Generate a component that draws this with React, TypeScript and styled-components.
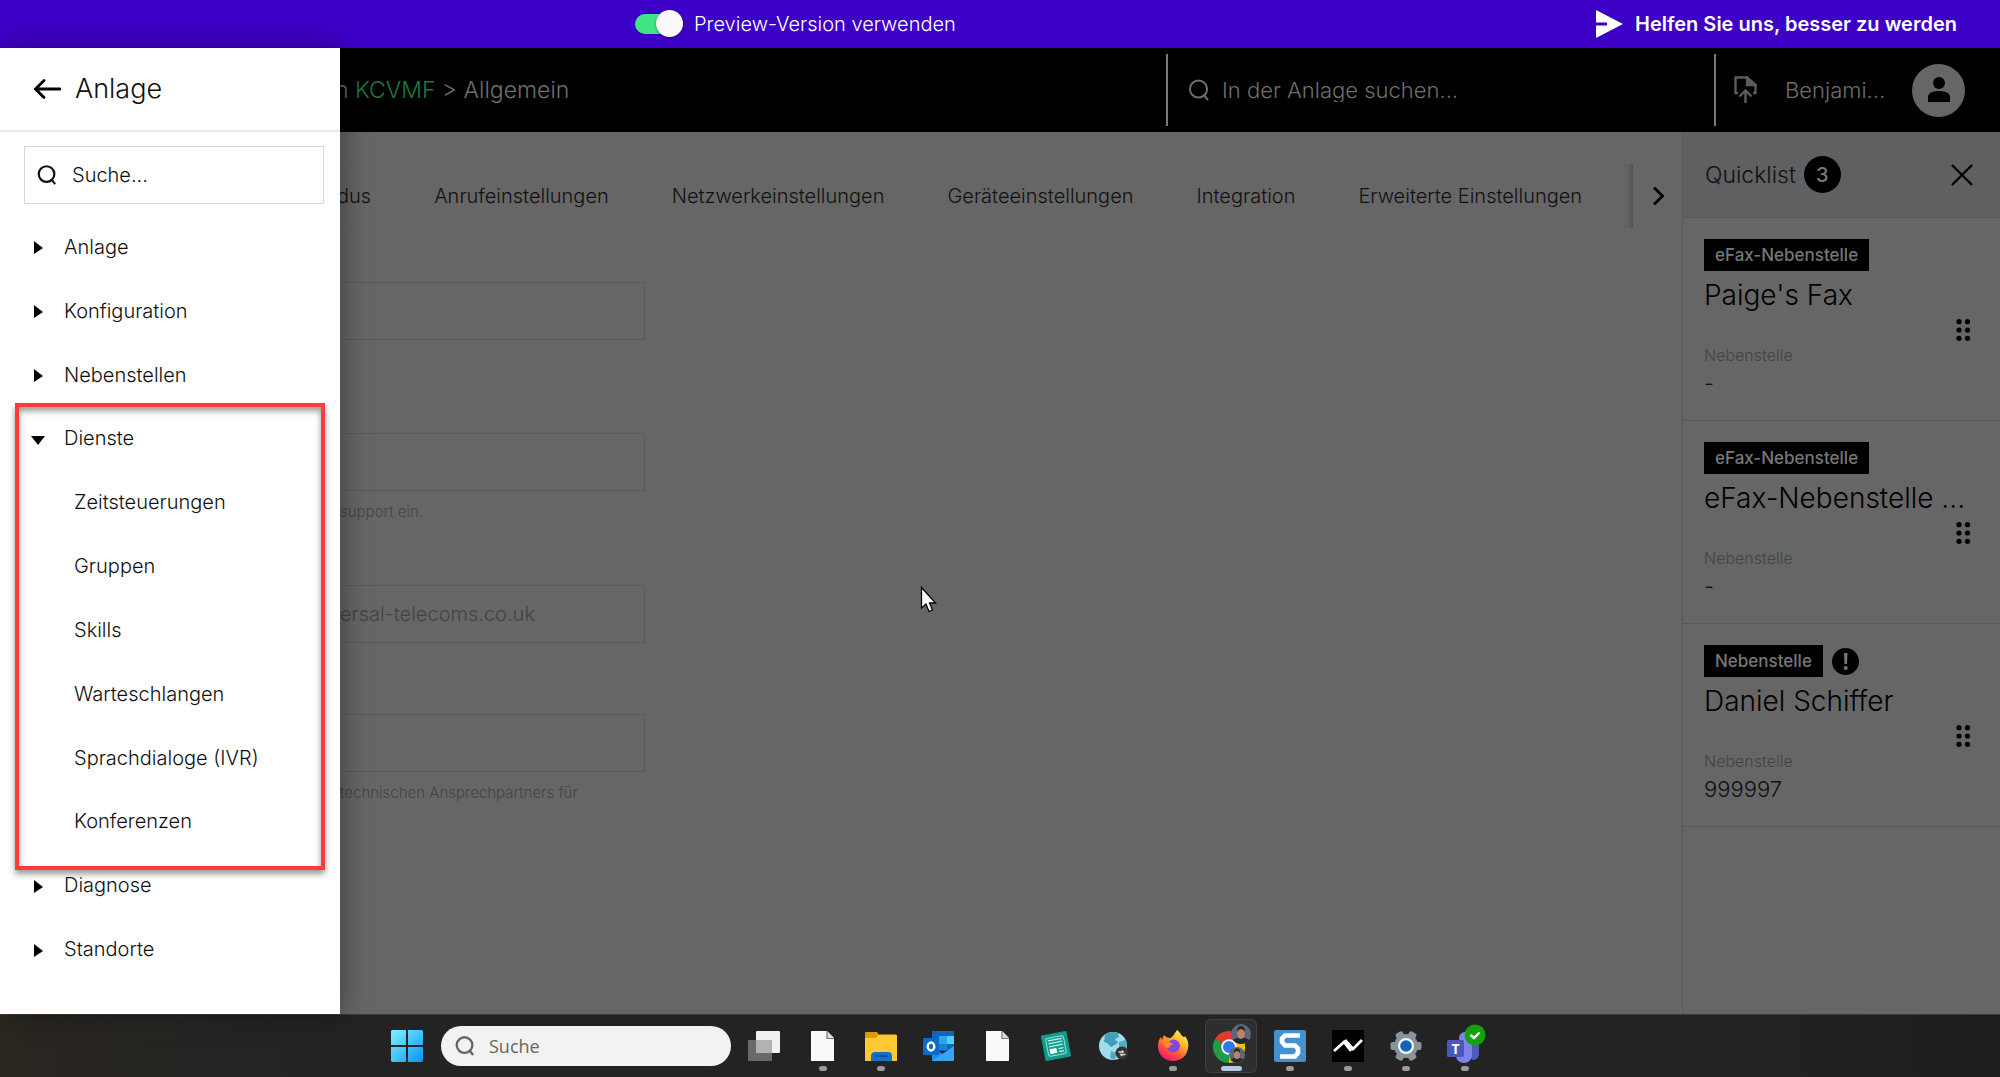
import React from 'react';
import styled, { createGlobalStyle, css } from 'styled-components';

const GlobalStyle = createGlobalStyle`
  *, *::before, *::after { box-sizing: border-box; }
  body {
    margin: 0;
    font-family: Inter, "Liberation Sans", sans-serif;
    font-weight: 300;
    font-size: 20px;
    line-height: 24px;
    color: #111;
  }
  button, input { font: inherit; color: inherit; }
  button { border: 0; padding: 0; background: none; text-align: left; cursor: pointer; }
  svg { display: block; flex: none; }
  h1, h2, h3, p, ul, dl, dd { margin: 0; padding: 0; font-size: inherit; font-weight: inherit; }
  ul { list-style: none; }
`;

const Screen = styled.div`
  display: flex;
  flex-direction: column;
  min-height: 100vh;
`;

/* Banner */

const Banner = styled.div`
  display: flex;
  align-items: center;
  justify-content: space-between;
  height: 48px;
  padding: 0 43px 1px 635px;
  background: #3c00c6;
  color: #fff;
`;

const SwitchLabel = styled.label`
  display: flex;
  align-items: center;
  gap: 11px;
`;

const Switch = styled.input`
  appearance: none;
  display: flex;
  align-items: center;
  justify-content: flex-end;
  width: 48px;
  height: 20px;
  margin: 0;
  border-radius: 10px;
  background: #41e584;
  &::before {
    content: '';
    width: 27px;
    height: 27px;
    border-radius: 50%;
    background: #fafafa;
    box-shadow: 0 1px 3px rgba(0, 0, 0, 0.4);
    flex: none;
  }
`;

const FeedbackLink = styled.a`
  display: flex;
  align-items: center;
  gap: 12px;
  color: #fff;
  font-weight: 600;
  text-decoration: none;
`;

/* Application frame */

const Frame = styled.div`
  flex: 1;
  display: grid;
  grid-template-columns: 340px minmax(0, 1fr);
`;

const Drawer = styled.nav`
  z-index: 1;
  display: flex;
  flex-direction: column;
  background: #fff;
  box-shadow: 4px 0 26px rgba(0, 0, 0, 0.35);
`;

const DrawerHead = styled.header`
  display: flex;
  align-items: center;
  gap: 14px;
  height: 84px;
  padding-left: 34px;
  border-bottom: 2px solid #e8e8e8;
  font-size: 27px;
  line-height: 32px;
`;

const DrawerSearch = styled.label`
  display: flex;
  align-items: center;
  gap: 15px;
  height: 58px;
  margin: 14px 16px 11px 24px;
  padding: 0 12px;
  border: 1px solid #d8d8d8;
`;

const SearchInput = styled.input`
  flex: 1;
  min-width: 0;
  padding: 0;
  border: 0;
  outline: 0;
  background: none;
  &::placeholder { color: inherit; opacity: 1; }
`;

const Menu = styled.ul`
  flex: 1;
  display: flex;
  flex-direction: column;
  margin-bottom: 33px;
`;

const MenuGroup = styled.li<{ $rows: number }>`
  position: relative;
  flex: ${p => p.$rows} 0 0;
  display: flex;
  flex-direction: column;
`;

const SubMenu = styled.ul<{ $rows: number }>`
  flex: ${p => p.$rows} 0 0;
  display: flex;
  flex-direction: column;
`;

const SubItem = styled.li`
  flex: 1;
  display: flex;
  align-items: center;
`;

const MenuButton = styled.button`
  flex: 1;
  display: flex;
  align-items: center;
  gap: 18px;
  width: 100%;
  min-height: 40px;
  padding-left: 31px;
`;

const MenuLink = styled.a`
  padding: 8px 0 8px 74px;
  color: inherit;
  text-decoration: none;
`;

const Highlight = styled.div`
  position: absolute;
  inset: -3px 15px -17px 15px;
  border: 4px solid #ff3b3b;
  box-shadow: 0 4px 6px rgba(0, 0, 0, 0.4), inset 0 4px 6px rgba(0, 0, 0, 0.4);
  pointer-events: none;
`;

const Stage = styled.div`
  display: flex;
  flex-direction: column;
  min-width: 0;
  background: #666;
`;

const TopBar = styled.header`
  display: flex;
  align-items: center;
  height: 84px;
  padding-right: 35px;
  background: #000;
  color: #6e6e6e;
  font-size: 22px;
`;

const Breadcrumb = styled.h1`
  flex: 1;
  margin-left: -5px;
  font-size: 23px;
  line-height: 32px;
  white-space: nowrap;
`;

const Accent = styled.a`
  color: #1b7c3c;
  text-decoration: none;
`;

const TopSearch = styled.label`
  flex: 0 0 548px;
  display: flex;
  align-items: center;
  gap: 12px;
  height: 72px;
  padding-left: 20px;
  border-left: 2px solid #777;
`;

const Account = styled.div`
  display: flex;
  align-items: center;
  height: 72px;
  padding-left: 18px;
  border-left: 2px solid #777;
`;

const UserName = styled.span`
  width: 127px;
  margin-left: 28px;
`;

const Avatar = styled.button`
  display: grid;
  place-items: center;
  width: 53px;
  height: 53px;
  border-radius: 50%;
  background: #666;
  color: #000;
`;

const Body = styled.div`
  flex: 1;
  display: grid;
  grid-template-columns: minmax(0, 1fr) 318px;
`;

const Content = styled.main`
  min-width: 0;
`;

const TabRow = styled.div`
  display: flex;
  height: 96px;
  padding-top: 32px;
`;

const Tabs = styled.div`
  flex: 1;
  display: flex;
  align-items: center;
  gap: 63px;
  margin-left: -3px;
  overflow: hidden;
  box-shadow: inset -7px 0 6px -6px rgba(0, 0, 0, 0.3);
`;

const Tab = styled.button`
  flex: none;
  white-space: nowrap;
`;

const TabScroll = styled.button`
  display: grid;
  place-items: center;
  width: 49px;
`;

const Field = styled.div<{ $space: number }>`
  width: 305px;
  margin-top: ${p => p.$space}px;
`;

const FieldInput = styled.input`
  width: 100%;
  height: 58px;
  padding: 0;
  border: 1px solid #5b5b5b;
  border-left: 0;
  outline: 0;
  background: none;
  color: #444;
`;

const Hint = styled.p`
  margin-top: 11px;
  color: #454545;
  font-size: 15px;
  line-height: 20px;
  white-space: nowrap;
`;

/* Quicklist */

const Panel = styled.aside`
  border-left: 1px solid #5a5a5a;
`;

const PanelHead = styled.header`
  display: flex;
  align-items: center;
  height: 86px;
  padding: 0 27px 0 22px;
  border-bottom: 1px solid #585a5c;
  background: #5e6062;
`;

const PanelTitle = styled.h2`
  font-size: 23px;
  margin-right: 8px;
  line-height: 32px;
`;

const Count = styled.span`
  display: grid;
  place-items: center;
  width: 37px;
  height: 37px;
  margin-right: auto;
  border-radius: 50%;
  background: #000;
  color: #777;
  font-weight: 500;
`;

const Card = styled.article`
  display: grid;
  grid-template-columns: 1fr auto;
  padding: 21px 29px 23px 21px;
  border-bottom: 1px solid #5a5a5a;
`;

const CardTop = styled.div`
  grid-column: 1 / -1;
  display: flex;
  align-items: center;
  gap: 9px;
`;

const Tag = styled.span`
  height: 32px;
  padding: 0 11px;
  background: #000;
  color: #777;
  font-size: 17px;
  font-weight: 500;
  line-height: 32px;
`;

const CardTitle = styled.h3`
  grid-column: 1 / -1;
  color: #000;
  font-size: 28px;
  line-height: 48px;
  white-space: nowrap;
`;

const Detail = styled.dl`
  margin-top: 24px;
  dt { color: #444; font-size: 16px; line-height: 24px; }
  dd { margin-top: 2px; font-size: 22px; line-height: 28px; }
`;

const Handle = styled.button`
  align-self: start;
`;

/* Taskbar */

const Taskbar = styled.footer`
  display: flex;
  align-items: center;
  justify-content: center;
  height: 63px;
  padding: 0 115px 1px 0;
  border-top: 1px solid #3a3a3a;
  background: linear-gradient(90deg, #2a2620 0, #232323 15%, #232323 85%, #1e1e1e 100%);
`;

const TaskSearch = styled.label`
  display: flex;
  align-items: center;
  gap: 14px;
  width: 290px;
  height: 40px;
  margin: 0 4px 0 18px;
  padding: 0 14px;
  border-radius: 20px;
  background: #f2f2f2;
  color: #666;
  font-family: "Open Sans", "Noto Sans", sans-serif;
  font-size: 18px;
  font-weight: 400;
`;

const AppGrid = styled.div`
  display: grid;
  grid-template-columns: repeat(13, 1fr);
  width: 759px;
`;

const AppButton = styled.button<{ $active?: boolean; $running?: boolean }>`
  position: relative;
  display: grid;
  place-items: center;
  height: 54px;
  border-radius: 6px;
  ${p => p.$active && css`
    margin: 0 3px;
    background: #2e2e2e;
    box-shadow: inset 0 0 0 1px #404040;
  `}
  ${p => (p.$running || p.$active) && css`
    &::after {
      content: '';
      position: absolute;
      bottom: 2px;
      width: ${p.$active ? 21 : 8}px;
      height: 5px;
      border-radius: 3px;
      background: ${p.$active ? '#b4cbe2' : '#9a9a9a'};
    }
  `}
`;

const Cursor = styled.svg`
  position: absolute;
  left: 920px;
  top: 586px;
  z-index: 2;
`;

/* Icons */

const SearchIcon = ({ size = 22, width = 2 }) => (
  <svg width={size} height={size} viewBox="0 0 22 22" fill="none" stroke="currentColor" strokeWidth={width}>
    <circle cx="10.5" cy="10" r="8.6" />
    <path d="M15.5 15.5 L20 21" />
  </svg>
);

const CaretRight = () => (
  <svg width="15" height="15" viewBox="0 0 15 15"><path d="M3 2 L12 9 L3 15 Z" fill="#000" /></svg>
);

const CaretDown = () => (
  <svg width="15" height="15" viewBox="0 0 15 15"><path d="M0 5 H14 L7 14 Z" fill="#000" /></svg>
);

const PersonIcon = () => (
  <svg width="24" height="26" viewBox="0 0 24 26" fill="currentColor">
    <circle cx="12" cy="6" r="6" />
    <path d="M1 25 V20 C1 16 6 14 12 14 S23 16 23 20 V25 Z" />
  </svg>
);

const UploadIcon = () => (
  <svg width="23" height="28" viewBox="0 0 23 28" fill="none" stroke="#5c5c5c" strokeWidth="2.4">
    <path d="M4 17 H1.5 V1.5 H13 L21.5 9 V17 H19" />
    <path d="M13 1.5 V9 H21.5 Z" fill="#5c5c5c" />
    <path d="M11.5 27 V14.500 M5.500 20.500 L11.500 14.500 L17.500 20.500" />
  </svg>
);

const DotsIcon = () => (
  <svg width="15" height="22" viewBox="0 0 15 22" fill="#000">
    {[3, 11.5].map(x => [2.7, 11, 19.3].map(y => <circle key={`${x}-${y}`} cx={x} cy={y} r="2.6" />))}
  </svg>
);

const StartIcon = () => (
  <svg width="32" height="32" viewBox="0 0 32 32">
    <defs>
      <linearGradient id="win" x1="0" y1="0" x2="32" y2="32" gradientUnits="userSpaceOnUse">
        <stop stopColor="#7df3ff" /><stop offset="1" stopColor="#0a93f5" />
      </linearGradient>
    </defs>
    <path fill="url(#win)" d="M1 0 H15 V15 H0 V1 Z M17 0 H31 L32 1 V15 H17 Z M0 17 H15 V32 H1 L0 31 Z M17 17 H32 V31 L31 32 H17 Z" />
  </svg>
);

const TaskViewIcon = () => (
  <svg width="34" height="32" viewBox="0 0 34 32">
    <rect x="9" y="1" width="24" height="22" rx="1" fill="#f1f1f1" />
    <rect x="1" y="10" width="24" height="21" rx="1" fill="#777" fillOpacity="0.85" />
    <rect x="9" y="10" width="16" height="13" fill="#b2b2b2" />
  </svg>
);

const FileIcon = () => (
  <svg width="24" height="32" viewBox="0 0 24 32">
    <path d="M0 1 H16 L23 8 V31 H0 Z" fill="#fafafa" />
    <path d="M16 1 V8.500 H23" fill="#ddd" stroke="#777" strokeWidth="1.200" />
  </svg>
);

const FolderIcon = () => (
  <svg width="34" height="32" viewBox="0 0 34 32">
    <path d="M1 3 Q1 2 2 2 H13 L15 5 H31 V12 H1 Z" fill="#e09b00" />
    <path d="M1 8 H12 L15 4.500 H32 Q33 4.500 33 6 V31 H1 Z" fill="#ffc933" />
    <path d="M7 31 V26 Q7 22 11 22 H24 Q28 22 28 26 V31 Z" fill="#1272c8" />
    <path d="M11 26 H24" stroke="#0b4f92" strokeWidth="2" />
  </svg>
);

const OutlookIcon = () => (
  <svg width="32" height="32" viewBox="0 0 32 32">
    <rect x="9" y="1" width="22" height="20" fill="#1066b8" />
    <rect x="16" y="6" width="8" height="8" fill="#28a8ea" />
    <rect x="24" y="6" width="7" height="8" fill="#50d0fa" />
    <rect x="16" y="14" width="8" height="6" fill="#1583d4" />
    <path d="M9 17 L31 31 H9 Z" fill="#1d8fe0" />
    <path d="M31 16 V31 H9 Z" fill="#35a4ee" />
    <rect x="0" y="8" width="16" height="17" rx="1" fill="#0a6cc9" />
    <ellipse cx="8" cy="16.500" rx="3.300" ry="4" fill="none" stroke="#fff" strokeWidth="2.400" />
  </svg>
);

const NewsIcon = () => (
  <svg width="32" height="32" viewBox="0 0 32 32">
    <g transform="rotate(-11 16 16)">
      <rect x="3" y="3" width="26" height="26" rx="1" fill="#0f9c8f" />
      <rect x="7" y="7" width="18" height="18" rx="2" fill="none" stroke="#9fe0d8" />
      <path d="M9 9.500 H23 M9 12.500 H23 M9 15.500 H23 M18 19 H23 M18 22 H23" stroke="#c8efea" strokeWidth="1.300" />
      <rect x="9" y="18" width="7" height="5" fill="#fff" />
    </g>
  </svg>
);

const GlobeIcon = () => (
  <svg width="32" height="32" viewBox="0 0 32 32">
    <circle cx="15" cy="16" r="14" fill="#a3dcec" />
    <path d="M7 5 Q14 0 20 3 L21 7 L17 9 L20 13 L13 17 L9 13 L6 12 Z" fill="#3f9fb9" />
    <path d="M21 12 L28 10 L29 18 L24 22 L21 18 Z M13 21 L19 23 L17 30 L12 28 Z" fill="#4fabc4" />
    <circle cx="24" cy="23" r="6.500" fill="#333" />
    <path d="M20.500 22 H25 L24 20.500 M27.500 24.500 H23 L24 26" fill="none" stroke="#ddd" strokeWidth="1.600" />
  </svg>
);

const FirefoxIcon = () => (
  <svg width="32" height="32" viewBox="0 0 32 32">
    <defs>
      <linearGradient id="fox" x1="26" y1="2" x2="8" y2="30" gradientUnits="userSpaceOnUse">
        <stop stopColor="#fff14a" /><stop offset="0.35" stopColor="#ffb02e" />
        <stop offset="0.65" stopColor="#ff5a36" /><stop offset="1" stopColor="#f2127b" />
      </linearGradient>
    </defs>
    <path fill="url(#fox)" d="M20 0 C24 3 24 6 27 7 Q28 7 28 6 C31 10 32 14 31 18 C30 26 24 31 16 31 C8 31 1 25 1 16 C1 12 2 9 4 7 L5 10 L7 5 Q9 8 12 8 C15 9 17 4 20 0 Z" />
    <circle cx="16.500" cy="16" r="6.500" fill="#8546e0" />
    <path d="M5 11 Q11 10 16 14 Q13 15 12 18 Q6 18 5 11 Z" fill="#ff8a1e" />
  </svg>
);

const Face = ({ x, y, r }: { x: number; y: number; r: number }) => (
  <g transform={`translate(${x} ${y}) scale(${r / 10})`}>
    <circle r="10" fill="#5b6878" />
    <path d="M-8 6 Q-5 3 0 4 Q5 3 8 6 Q4 10 0 10 Q-4 10 -8 6 Z" fill="#26282d" />
    <ellipse cy="-1" rx="4" ry="6" fill="#b98468" />
    <path d="M-4 -2 Q-4 -8 0 -8 Q4 -8 4 -2 Q2 -5 0 -5 Q-2 -5 -4 -2 Z" fill="#2b211e" />
  </g>
);

const ChromeIcon = () => (
  <svg width="42" height="44" viewBox="0 0 42 44">
    <path d="M19 23 L5.140 15 A16 16 0 0 1 32.860 15 Z" fill="#e23b2e" />
    <path d="M19 23 L32.860 15 A16 16 0 0 1 19 39 Z" fill="#fbbf12" />
    <path d="M19 23 L19 39 A16 16 0 0 1 5.140 15 Z" fill="#249a48" />
    <circle cx="19" cy="23" r="7.800" fill="#fff" />
    <circle cx="19" cy="23" r="6" fill="#2f78ee" />
    <Face x={31} y={10} r={10} />
    <Face x={27} y={31} r={8} />
  </svg>
);

const SnagitIcon = () => (
  <svg width="32" height="32" viewBox="0 0 32 32">
    <rect width="32" height="32" rx="2" fill="#4690cd" />
    <path d="M26 5.500 H11 L8 8.500 V12 L11 15.500 H21 L24 18.500 V23 L21 26.500 H6" fill="none" stroke="#fff" strokeWidth="4.600" />
  </svg>
);

const WaveIcon = () => (
  <svg width="32" height="32" viewBox="0 0 32 32">
    <rect width="32" height="32" fill="#000" />
    <path d="M2 21 L12 12 L19 21 M13 10 L21 19 L30 10" fill="none" stroke="#fff" strokeWidth="2.800" />
  </svg>
);

const GearIcon = () => (
  <svg width="34" height="34" viewBox="-17 -17 34 34">
    <g fill="#89939b">
      {[0, 60, 120].map(a => <rect key={a} x="-15.500" y="-4" width="31" height="8" rx="2" transform={`rotate(${a})`} />)}
      <circle r="12" />
    </g>
    <circle r="8" fill="#f3f7fa" />
    <circle r="5.800" fill="#1267b5" />
  </svg>
);

const TeamsLetter = styled.text`
  font: 700 14px "Open Sans", sans-serif;
`;

const TeamsIcon = () => (
  <svg width="42" height="44" viewBox="0 0 42 44">
    <circle cx="21" cy="14" r="6" fill="#7f86ea" />
    <path d="M22 20 H35 V31 Q34 36 28 36 Z" fill="#5159bd" />
    <path d="M12 19 H28 V31 Q27 39 20 39 Q13 39 12 32 Z" fill="#7c84ea" />
    <rect x="3" y="16" width="17" height="17" rx="1.500" fill="#4c55b8" />
    <TeamsLetter x="11.500" y="30" textAnchor="middle" fill="#fff">T</TeamsLetter>
    <circle cx="31" cy="11" r="10.500" fill="#13a10e" />
    <path d="M26.500 11 L30 14 L35.500 8.500" fill="none" stroke="#fff" strokeWidth="2.400" />
  </svg>
);

/* Data */

const groups: { label: string; children?: string[] }[] = [
  { label: 'Anlage' },
  { label: 'Konfiguration' },
  { label: 'Nebenstellen' },
  {
    label: 'Dienste',
    children: ['Zeitsteuerungen', 'Gruppen', 'Skills', 'Warteschlangen', 'Sprachdialoge (IVR)', 'Konferenzen'],
  },
  { label: 'Diagnose' },
  { label: 'Standorte' },
];

const tabs = ['dus', 'Anrufeinstellungen', 'Netzwerkeinstellungen', 'Geräteeinstellungen', 'Integration', 'Erweiterte Einstellungen'];

const fields = [
  { space: 54, value: '', hint: '' },
  { space: 93, value: '', hint: 'support ein.' },
  { space: 63, value: 'ersal-telecoms.co.uk', hint: '' },
  { space: 71, value: '', hint: 'technischen Ansprechpartners für' },
];

const cards = [
  { tag: 'eFax-Nebenstelle', title: "Paige's Fax", value: '-', alert: false },
  { tag: 'eFax-Nebenstelle', title: 'eFax-Nebenstelle ...', value: '-', alert: false },
  { tag: 'Nebenstelle', title: 'Daniel Schiffer', value: '999997', alert: true },
];

const apps: { name: string; icon: React.ReactNode; running?: boolean; active?: boolean }[] = [
  { name: 'Task View', icon: <TaskViewIcon /> },
  { name: 'Dokument', icon: <FileIcon />, running: true },
  { name: 'Explorer', icon: <FolderIcon />, running: true },
  { name: 'Outlook', icon: <OutlookIcon /> },
  { name: 'Datei', icon: <FileIcon /> },
  { name: 'News', icon: <NewsIcon /> },
  { name: 'Globus', icon: <GlobeIcon /> },
  { name: 'Firefox', icon: <FirefoxIcon />, running: true },
  { name: 'Chrome', icon: <ChromeIcon />, active: true },
  { name: 'Snagit', icon: <SnagitIcon />, running: true },
  { name: 'Monitor', icon: <WaveIcon />, running: true },
  { name: 'Einstellungen', icon: <GearIcon />, running: true },
  { name: 'Teams', icon: <TeamsIcon />, running: true },
];

export default function App() {
  return (
    <Screen>
      <GlobalStyle />
      <Banner>
        <SwitchLabel>
          <Switch type="checkbox" role="switch" defaultChecked />
          Preview-Version verwenden
        </SwitchLabel>
        <FeedbackLink href="#feedback">
          <svg width="27" height="28" viewBox="0 0 27 28">
            <path d="M0 0 L27 14 L0 28 V15.500 H11 V12.500 H0 Z" fill="#fff" />
          </svg>
          Helfen Sie uns, besser zu werden
        </FeedbackLink>
      </Banner>

      <Frame>
        <Drawer>
          <DrawerHead>
            <button aria-label="Zurück">
              <svg width="27" height="20" viewBox="0 0 27 20" fill="none" stroke="#000" strokeWidth="2.800" strokeLinecap="round">
                <path d="M2 10 H26 M10 1.500 L1.500 10 L10 18.500" />
              </svg>
            </button>
            <h2>Anlage</h2>
          </DrawerHead>
          <DrawerSearch>
            <SearchIcon size={20} width={2.4} />
            <SearchInput placeholder="Suche..." aria-label="Suche" />
          </DrawerSearch>
          <Menu>
            {groups.map(({ label, children }) => (
              <MenuGroup key={label} $rows={1 + (children?.length ?? 0)}>
                <MenuButton aria-expanded={!!children}>
                  {children ? <CaretDown /> : <CaretRight />}
                  {label}
                </MenuButton>
                {children && (
                  <>
                    <SubMenu $rows={children.length}>
                      {children.map(c => <SubItem key={c}><MenuLink href="#menu">{c}</MenuLink></SubItem>)}
                    </SubMenu>
                    <Highlight />
                  </>
                )}
              </MenuGroup>
            ))}
          </Menu>
        </Drawer>

        <Stage>
          <TopBar>
            <Breadcrumb>n <Accent href="#anlage">KCVMF</Accent> &gt; Allgemein</Breadcrumb>
            <TopSearch>
              <SearchIcon />
              <SearchInput placeholder="In der Anlage suchen..." aria-label="In der Anlage suchen" />
            </TopSearch>
            <Account>
              <button aria-label="Hochladen"><UploadIcon /></button>
              <UserName>Benjami...</UserName>
              <Avatar aria-label="Profil"><PersonIcon /></Avatar>
            </Account>
          </TopBar>

          <Body>
            <Content>
              <TabRow>
                <Tabs role="tablist">
                  {tabs.map(t => <Tab key={t} role="tab">{t}</Tab>)}
                </Tabs>
                <TabScroll aria-label="Weiter">
                  <svg width="14" height="20" viewBox="0 0 14 20" fill="none" stroke="#000" strokeWidth="2.800">
                    <path d="M3 1.500 L11.500 10 L3 18.500" />
                  </svg>
                </TabScroll>
              </TabRow>
              {fields.map((f, i) => (
                <Field key={i} $space={f.space}>
                  <FieldInput defaultValue={f.value} aria-label={`Feld ${i + 1}`} />
                  {f.hint && <Hint>{f.hint}</Hint>}
                </Field>
              ))}
            </Content>

            <Panel>
              <PanelHead>
                <PanelTitle>Quicklist</PanelTitle>
                <Count>3</Count>
                <button aria-label="Schließen">
                  <svg width="22" height="22" viewBox="0 0 22 22" stroke="#000" strokeWidth="2.400">
                    <path d="M1 1 L21 21 M21 1 L1 21" />
                  </svg>
                </button>
              </PanelHead>
              {cards.map(c => (
                <Card key={c.title}>
                  <CardTop>
                    <Tag>{c.tag}</Tag>
                    {c.alert && (
                      <svg width="27" height="27" viewBox="0 0 27 27">
                        <circle cx="13.500" cy="13.500" r="13.500" fill="#000" />
                        <path d="M12 5 H15.500 L15 16 H12.500 Z" fill="#777" />
                        <circle cx="13.700" cy="20" r="2" fill="#777" />
                      </svg>
                    )}
                  </CardTop>
                  <CardTitle>{c.title}</CardTitle>
                  <Detail>
                    <dt>Nebenstelle</dt>
                    <dd>{c.value}</dd>
                  </Detail>
                  <Handle aria-label="Verschieben"><DotsIcon /></Handle>
                </Card>
              ))}
            </Panel>
          </Body>
        </Stage>
      </Frame>

      <Taskbar>
        <button aria-label="Start"><StartIcon /></button>
        <TaskSearch>
          <SearchIcon size={20} width={2.6} />
          <SearchInput placeholder="Suche" aria-label="Suche" />
        </TaskSearch>
        <AppGrid>
          {apps.map(a => (
            <AppButton key={a.name} aria-label={a.name} $running={a.running} $active={a.active}>{a.icon}</AppButton>
          ))}
        </AppGrid>
      </Taskbar>

      <Cursor width="17" height="28" viewBox="0 0 17 28">
        <path d="M1.500 1.500 V22 L6 18 L9 25.500 L12.500 24 L9.500 17 H15.500 Z" fill="#fff" stroke="#000" strokeWidth="1.300" />
      </Cursor>
    </Screen>
  );
}
